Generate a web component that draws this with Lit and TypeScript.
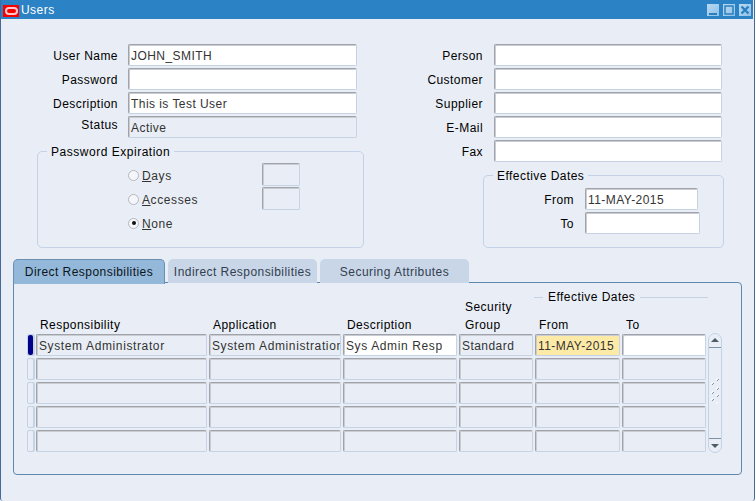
import { LitElement, html, css, svg } from "lit";
import { customElement } from "lit/decorators.js";

const COLS = ["w1", "w2", "w3", "w4", "w5", "w6"];
const ROW1: [string, string][] = [
  ["System Administrator", "ro wide"],
  ["System Administration", "ro wide"],
  ["Sys Admin Resp", "rw wide"],
  ["Standard", "ro"],
  ["11-MAY-2015", "req"],
  ["", "rw"],
];

@customElement("app-root")
export class AppRoot extends LitElement {
  static styles = css`
    :host {
      display: block;
      width: 756px;
      height: 501px;
      background: #fff;
      font-family: "Liberation Sans", Arial, sans-serif;
      font-size: 12px;
      letter-spacing: 0.45px;
      color: #000;
      overflow: hidden;
    }
    .win {
      box-sizing: border-box;
      width: 755px;
      height: 501px;
      background: #e9eef6;
      border-left: 1px solid #44699d;
      border-right: 1px solid #44699d;
      border-bottom-left-radius: 3px;
      border-bottom-right-radius: 3px;
      display: flex;
      flex-direction: column;
    }
    .title {
      height: 19px;
      margin-right: 1px;
      background: #2b82c4;
      color: #fff;
      display: flex;
      align-items: center;
      padding-left: 2px;
      flex: none;
    }
    .logo {
      width: 16px;
      height: 12px;
      background: #f80000;
      display: flex;
      align-items: center;
      justify-content: center;
      margin-right: 2px;
      margin-top: 3px;
    }
    .logo i {
      display: block;
      box-sizing: border-box;
      width: 13px;
      height: 8px;
      border: 2px solid #ffc8c8;
      border-radius: 4px;
    }
    .wbtns {
      margin-left: auto;
      display: flex;
      gap: 4px;
      margin-right: 2px;
      margin-top: 1px;
    }
    .wbtn {
      width: 12px;
      height: 12px;
      background: linear-gradient(135deg, #b9d9f2, #8fc0e6);
      display: block;
    }
    .top {
      display: flex;
      padding: 25px 0 0 0;
      height: 240px;
      box-sizing: border-box;
      flex: none;
    }
    .left {
      width: 363px;
      flex: none;
      display: flex;
      flex-direction: column;
    }
    .right {
      width: 360px;
      flex: none;
      display: flex;
      flex-direction: column;
    }
    .row {
      display: flex;
      height: 24px;
      align-items: flex-start;
    }
    .lab {
      text-align: right;
      line-height: 22px;
      padding-top: 1px;
      white-space: nowrap;
      box-sizing: border-box;
      flex: none;
    }
    .left .lab { width: 117px; margin-right: 10px; }
    .right .lab { width: 119px; margin-right: 11px; }
    .left .lab.stlab { line-height: 18px; padding-top: 0; }
    .f {
      box-sizing: border-box;
      height: 22px;
      border: 1px solid #c5d3e5;
      border-top-color: #a0a4aa;
      border-left-color: #a0a4aa;
      box-shadow: inset 1px 1px 0 #c9cdd3;
      border-radius: 2px;
      background: #fff;
      color: #333;
      line-height: 19px;
      padding: 2px 0 0 2px;
      white-space: nowrap;
      overflow: hidden;
      flex: none;
    }
    .f.ro { background: #e9eef6; }
    .f.req { background: #fdeaa6; }
    .f.wide { letter-spacing: 0.62px; }
    .left .f.main { width: 229px; }
    .right .f.main { width: 228px; }
    .group {
      position: relative;
      box-sizing: border-box;
      border: 1px solid #c3d2e4;
      border-radius: 5px;
    }
    .legend {
      position: absolute;
      top: -8px;
      background: #e9eef6;
      padding: 0 4px;
      line-height: 16px;
      white-space: nowrap;
    }
    .pwd {
      margin: 11px 0 0 36px;
      width: 327px;
      height: 97px;
      padding: 12px 0 0 90px;
      display: flex;
    }
    .pwd .legend { left: 9px; letter-spacing: 0.52px; }
    .radios { width: 134px; flex: none; }
    .radio {
      display: flex;
      align-items: center;
      height: 24px;
      color: #333;
      gap: 3px;
      letter-spacing: 0.6px;
    }
    .rb {
      box-sizing: border-box;
      width: 11px;
      height: 11px;
      border-radius: 50%;
      border: 1px solid #b4b8be;
      background: #f4f6fa;
      display: flex;
      align-items: center;
      justify-content: center;
      margin-top: -2px;
    }
    .rb b {
      width: 4px;
      height: 4px;
      border-radius: 50%;
      background: #111;
    }
    u { text-underline-offset: 1px; }
    .small { display: flex; flex-direction: column; gap: 1px; margin-top: -1px; }
    .small .f { width: 38px; height: 23px; }
    .eff {
      margin: 11px 0 0 119px;
      width: 241px;
      height: 73px;
      padding: 12px 0 0 0;
    }
    .eff .legend { left: 9px; }
    .right .eff .row .lab { width: 90px; margin-right: 11px; }
    .eff .from { width: 113px; }
    .eff .to { width: 115px; }
    .tabs {
      display: flex;
      gap: 3px;
      margin: 0 0 0 12px;
      height: 24px;
      flex: none;
      position: relative;
      z-index: 1;
    }
    .tab {
      box-sizing: border-box;
      width: 149px;
      height: 24px;
      background: #c8d6e8;
      border-radius: 5px 5px 0 0;
      color: #33404f;
      text-align: center;
      line-height: 26px;
    }
    .tab.on {
      width: 152px;
      background: #94b8d9;
      border: 1px solid #6a90b4;
      border-bottom: none;
      color: #0b1520;
      line-height: 24px;
      height: 25px;
    }
    .panel {
      box-sizing: border-box;
      margin: -1px 0 0 12px;
      width: 729px;
      height: 193px;
      border: 1px solid #5f88ad;
      border-radius: 0 4px 4px 4px;
      padding: 10px 0 0 13px;
    }
    .heads {
      display: flex;
      height: 41px;
      gap: 2px;
      margin-left: 9px;
      align-items: flex-end;
    }
    .h {
      line-height: 18px;
      padding-left: 4px;
      box-sizing: border-box;
      flex: none;
    }
    .h.w4 { padding-left: 6px; }
    .h.w5 { padding-left: 4px; position: relative; }
    .h.w6 { padding-left: 4px; }
    .band {
      position: absolute;
      left: -1px;
      top: -27px;
      width: 174px;
      display: flex;
      align-items: center;
      gap: 5px;
      line-height: 16px;
      white-space: nowrap;
    }
    .band i {
      height: 1px;
      background: #c3d2e4;
      flex: 1;
      display: block;
    }
    .band i:first-child { flex: none; width: 9px; }
    .grid {
      display: flex;
      gap: 2px;
    }
    .rows {
      display: flex;
      flex-direction: column;
      gap: 2px;
    }
    .tr {
      display: flex;
      gap: 2px;
    }
    .ind {
      box-sizing: border-box;
      width: 7px;
      height: 22px;
      border: 1px solid #c3d2e4;
      border-radius: 2px;
      background: #e9eef6;
      box-shadow: 1px 0 0 #c8d6e8;
      flex: none;
    }
    .ind.cur i {
      display: block;
      height: 100%;
      background: #00008b;
      border-radius: 2px;
    }
    .f.w1, .h.w1 { width: 171px; }
    .f.w2, .h.w2 { width: 132px; }
    .f.w3, .h.w3 { width: 114px; }
    .f.w4, .h.w4 { width: 74px; }
    .f.w5, .h.w5 { width: 85px; }
    .f.w6, .h.w6 { width: 84px; }
    .sb {
      box-sizing: border-box;
      width: 14px;
      height: 120px;
      margin-top: -1px;
      border: 1px solid #c3d2e4;
      border-radius: 7px;
      display: flex;
      flex-direction: column;
      align-items: center;
      justify-content: space-between;
      flex: none;
      position: relative;
    }
    .sb svg { display: block; }
    .sb .grip { position: absolute; left: 0; top: 43px; }
  `;

  private winBtn(kind: string) {
    const glyph =
      kind === "min"
        ? svg`<rect x="2" y="9" width="8" height="2" fill="#2b7fbe"/>`
        : kind === "max"
        ? svg`<rect x="2" y="2" width="8" height="8" fill="none" stroke="#2b7fbe" stroke-width="1.5"/>`
        : svg`<path d="M2.500 2.500 9.500 9.500M9.500 2.500 2.500 9.500" stroke="#2b7fbe" stroke-width="2.400" fill="none"/>`;
    return html`<svg class="wbtn" viewBox="0 0 12 12">${glyph}</svg>`;
  }

  private field(label: string, value = "", cls = "") {
    return html`<div class="row">
      <div class="lab">${label}</div>
      <div class="f main ${cls}">${value}</div>
    </div>`;
  }

  private radio(letter: string, rest: string, on = false) {
    return html`<div class="radio">
      <span class="rb">${on ? html`<b></b>` : ""}</span>
      <span><u>${letter}</u>${rest}</span>
    </div>`;
  }

  render() {
    return html`
      <div class="win">
        <div class="title">
          <span class="logo"><i></i></span>
          <span>Users</span>
          <span class="wbtns">${this.winBtn("min")}${this.winBtn("max")}${this.winBtn("close")}</span>
        </div>

        <div class="top">
          <div class="left">
            ${this.field("User Name", "JOHN_SMITH")}
            ${this.field("Password")}
            ${this.field("Description", "This is Test User")}
            <div class="row">
              <div class="lab stlab">Status</div>
              <div class="f main ro">Active</div>
            </div>
            <div class="group pwd">
              <span class="legend">Password Expiration</span>
              <div class="radios">
                ${this.radio("D", "ays")}
                ${this.radio("A", "ccesses")}
                ${this.radio("N", "one", true)}
              </div>
              <div class="small">
                <div class="f ro"></div>
                <div class="f ro"></div>
              </div>
            </div>
          </div>
          <div class="right">
            ${this.field("Person")}
            ${this.field("Customer")}
            ${this.field("Supplier")}
            ${this.field("E-Mail")}
            ${this.field("Fax")}
            <div class="group eff">
              <span class="legend">Effective Dates</span>
              <div class="row">
                <div class="lab">From</div>
                <div class="f from">11-MAY-2015</div>
              </div>
              <div class="row">
                <div class="lab">To</div>
                <div class="f to"></div>
              </div>
            </div>
          </div>
        </div>

        <div class="tabs">
          <div class="tab on">Direct Responsibilities</div>
          <div class="tab">Indirect Responsibilities</div>
          <div class="tab">Securing Attributes</div>
        </div>

        <div class="panel">
          <div class="heads">
            <div class="h w1">Responsibility</div>
            <div class="h w2">Application</div>
            <div class="h w3">Description</div>
            <div class="h w4">Security<br />Group</div>
            <div class="h w5">
              <div class="band"><i></i><span>Effective Dates</span><i></i></div>
              From
            </div>
            <div class="h w6">To</div>
          </div>
          <div class="grid">
            <div class="rows">
              ${[0, 1, 2, 3, 4].map(
                (r) => html`<div class="tr">
                  <div class="ind ${r === 0 ? "cur" : ""}">${r === 0 ? html`<i></i>` : ""}</div>
                  ${COLS.map((c, i) => {
                    const cell = r === 0 ? ROW1[i] : ["", "ro"];
                    return html`<div class="f ${c} ${cell[1]}">${cell[0]}</div>`;
                  })}
                </div>`
              )}
            </div>
            <div class="sb">
              <svg width="12" height="14" viewBox="0 0 12 14">
                <path d="M2 8 6 4 10 8Z" fill="#4d5a68" />
                <rect x="0" y="13" width="12" height="1" fill="#7f93a8" />
              </svg>
              <svg class="grip" width="12" height="28" viewBox="0 0 12 28">
                <path fill="#ffffff" d="M7 2h1v1h-1zM8 1h1v1h-1zM2 6h1v1h-1zM3 5h1v1h-1zM7 11h1v1h-1zM8 10h1v1h-1zM2 15h1v1h-1zM3 14h1v1h-1zM7 18h1v1h-1zM8 17h1v1h-1zM2 22h1v1h-1zM3 21h1v1h-1zM7 26h1v1h-1zM8 25h1v1h-1z" />
                <path fill="#7f97b2" d="M8 3h1v1h-1zM9 2h1v1h-1zM3 7h1v1h-1zM4 6h1v1h-1zM8 12h1v1h-1zM9 11h1v1h-1zM3 16h1v1h-1zM4 15h1v1h-1zM8 19h1v1h-1zM9 18h1v1h-1zM3 23h1v1h-1zM4 22h1v1h-1z" />
              </svg>
              <svg width="12" height="14" viewBox="0 0 12 14">
                <rect x="0" y="0" width="12" height="1" fill="#7f93a8" />
                <path d="M2 6 6 10 10 6Z" fill="#4d5a68" />
              </svg>
            </div>
          </div>
        </div>
      </div>
    `;
  }
}
